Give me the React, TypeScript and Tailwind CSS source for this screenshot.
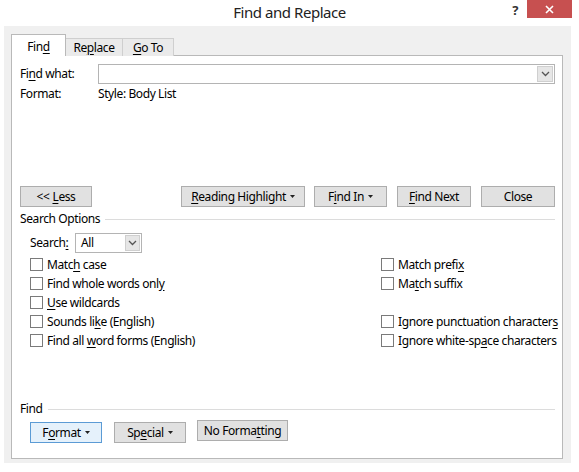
import React from 'react';

const font = { fontFamily: '"Segoe UI", "Noto Sans", "Liberation Sans", sans-serif' };

function U({ children }: { children: React.ReactNode }) {
    return <span className="underline underline-offset-2">{children}</span>;
}

function Caret() {
    return (
        <svg width="5" height="3" viewBox="0 0 5 3" className="ml-[4px] inline-block">
            <path d="M0 0h5L2.5 3z" fill="#222" />
        </svg>
    );
}

function Chevron() {
    return (
        <svg width="9" height="6" viewBox="0 0 9 6">
            <path d="M1 1l3.5 3.5L8 1" fill="none" stroke="#555" strokeWidth="1.3" />
        </svg>
    );
}

function Btn({ w, children, active }: { w: string; children: React.ReactNode; active?: boolean }) {
    return (
        <div
            className={`${w} h-[21px] flex items-center justify-center border whitespace-nowrap ${
                active ? 'border-[#5b9bd5] bg-[#e5f1fb]' : 'border-[#adadad] bg-[#e1e1e1]'
            }`}
        >
            {children}
        </div>
    );
}

function Check({ children }: { children: React.ReactNode }) {
    return (
        <div className="h-[19px] flex items-center whitespace-nowrap">
            <div className="w-[13px] h-[13px] shrink-0 border border-[#7a7a7a] bg-white mr-[4px]" />
            <span>{children}</span>
        </div>
    );
}

export default function App() {
    return (
        <div
            className="w-[579px] h-[472px] bg-white text-[12px] tracking-[-0.4px] text-black overflow-hidden"
            style={font}
        >
            {/* title bar */}
            <div className="h-[26px] grid grid-cols-[1fr_auto_1fr]">
                <div />
                <div className="text-[15px] tracking-[-0.45px] text-[#222] leading-[24px]">Find and Replace</div>
                <div className="flex justify-end items-start pr-[7px]">
                    <span className="text-[13px] font-bold text-[#333] mt-[1px] mr-[9px]">?</span>
                    <div className="w-[45px] h-[18px] bg-[#c75050] flex items-center justify-center">
                        <svg width="9" height="9" viewBox="0 0 9 9">
                            <path d="M1 1l7 7M8 1l-7 7" stroke="white" strokeWidth="1.6" />
                        </svg>
                    </div>
                </div>
            </div>

            {/* body */}
            <div className="ml-[4px] w-[567px] h-[437px] bg-[#f0f0f0] pl-[7px] pr-[8px] pt-[8px] flex flex-col">
                {/* tabs */}
                <div className="flex items-end h-[22px] relative z-10">
                    <div className="w-[55px] h-[22px] bg-white border border-b-0 border-[#b9b9b9] flex items-center justify-center pt-[2px]">
                        Fin<U>d</U>
                    </div>
                    <div className="w-[57px] h-[18px] bg-[#eaeaea] border border-l-0 border-b-0 border-[#cfcfcf] flex items-center justify-center">
                        Re<U>p</U>lace
                    </div>
                    <div className="w-[51px] h-[18px] bg-[#eaeaea] border border-l-0 border-b-0 border-[#cfcfcf] flex items-center justify-center">
                        <U>G</U>o To
                    </div>
                </div>

                {/* panel */}
                <div className="-mt-[1px] h-[404px] bg-white border border-[#b9b9b9] flex flex-col pl-[8px] pr-[7px]">
                    <div className="mt-[8px] flex items-center h-[20px]">
                        <div className="w-[78px]">
                            Fi<U>n</U>d what:
                        </div>
                        <div className="flex-1 h-[20px] border border-[#b4b4b4] flex justify-end items-center pr-[1px]">
                            <div className="w-[16px] h-[16px] bg-[#e6e6e6] border border-[#cfcfcf] flex items-center justify-center">
                                <Chevron />
                            </div>
                        </div>
                    </div>
                    <div className="mt-[3px] flex items-center h-[14px]">
                        <div className="w-[78px]">Format:</div>
                        <div>Style: Body List</div>
                    </div>

                    {/* main buttons */}
                    <div className="mt-[85px] flex items-center">
                        <Btn w="w-[72px]">
                            &lt;&lt; <span className="ml-[3px]"><U>L</U>ess</span>
                        </Btn>
                        <div className="ml-[89px]">
                            <Btn w="w-[124px]">
                                <U>R</U>eading Highlight
                                <Caret />
                            </Btn>
                        </div>
                        <div className="ml-[9px]">
                            <Btn w="w-[73px]">
                                F<U>i</U>nd In
                                <Caret />
                            </Btn>
                        </div>
                        <div className="ml-[10px]">
                            <Btn w="w-[74px]">
                                <U>F</U>ind Next
                            </Btn>
                        </div>
                        <div className="ml-[10px]">
                            <Btn w="w-[74px]">Close</Btn>
                        </div>
                    </div>

                    {/* search options */}
                    <div className="mt-[5px] h-[14px] flex items-center">
                        <span>Search Options</span>
                        <div className="flex-1 h-px bg-[#dcdcdc] ml-[5px]" />
                    </div>
                    <div className="mt-[7px] pl-[10px] flex items-center h-[20px]">
                        <span className="w-[45px]">
                            Search<U>:</U>
                        </span>
                        <div className="w-[67px] h-[20px] border border-[#b4b4b4] flex items-center justify-between pl-[5px] pr-[1px]">
                            <span>All</span>
                            <div className="w-[15px] h-[16px] bg-[#e6e6e6] border border-[#cfcfcf] flex items-center justify-center">
                                <Chevron />
                            </div>
                        </div>
                    </div>

                    <div className="mt-[2px] pl-[10px] flex">
                        <div className="w-[351px] shrink-0 flex flex-col">
                            <Check>
                                Matc<U>h</U> case
                            </Check>
                            <Check>
                                Find whole words onl<U>y</U>
                            </Check>
                            <Check>
                                <U>U</U>se wildcards
                            </Check>
                            <Check>
                                Sounds li<U>k</U>e (English)
                            </Check>
                            <Check>
                                Find all <U>w</U>ord forms (English)
                            </Check>
                        </div>
                        <div className="flex flex-col">
                            <Check>
                                Match prefi<U>x</U>
                            </Check>
                            <Check>
                                Ma<U>t</U>ch suffix
                            </Check>
                            <div className="h-[19px]" />
                            <Check>
                                Ignore punctuation character<U>s</U>
                            </Check>
                            <Check>
                                Ignore white-sp<U>a</U>ce characters
                            </Check>
                        </div>
                    </div>

                    {/* find section */}
                    <div className="mt-[52px] h-[14px] flex items-center">
                        <span>Find</span>
                        <div className="flex-1 h-px bg-[#dcdcdc] ml-[5px]" />
                    </div>
                    <div className="mt-[4px] pl-[10px] flex items-start">
                        <div className="mt-[2px]">
                            <Btn w="w-[72px]" active>
                                F<U>o</U>rmat
                                <Caret />
                            </Btn>
                        </div>
                        <div className="ml-[12px] mt-[2px]">
                            <Btn w="w-[72px]">
                                Sp<U>e</U>cial
                                <Caret />
                            </Btn>
                        </div>
                        <div className="ml-[11px]">
                            <Btn w="w-[91px]">
                                No Forma<U>t</U>ting
                            </Btn>
                        </div>
                    </div>
                </div>
            </div>
        </div>
    );
}
